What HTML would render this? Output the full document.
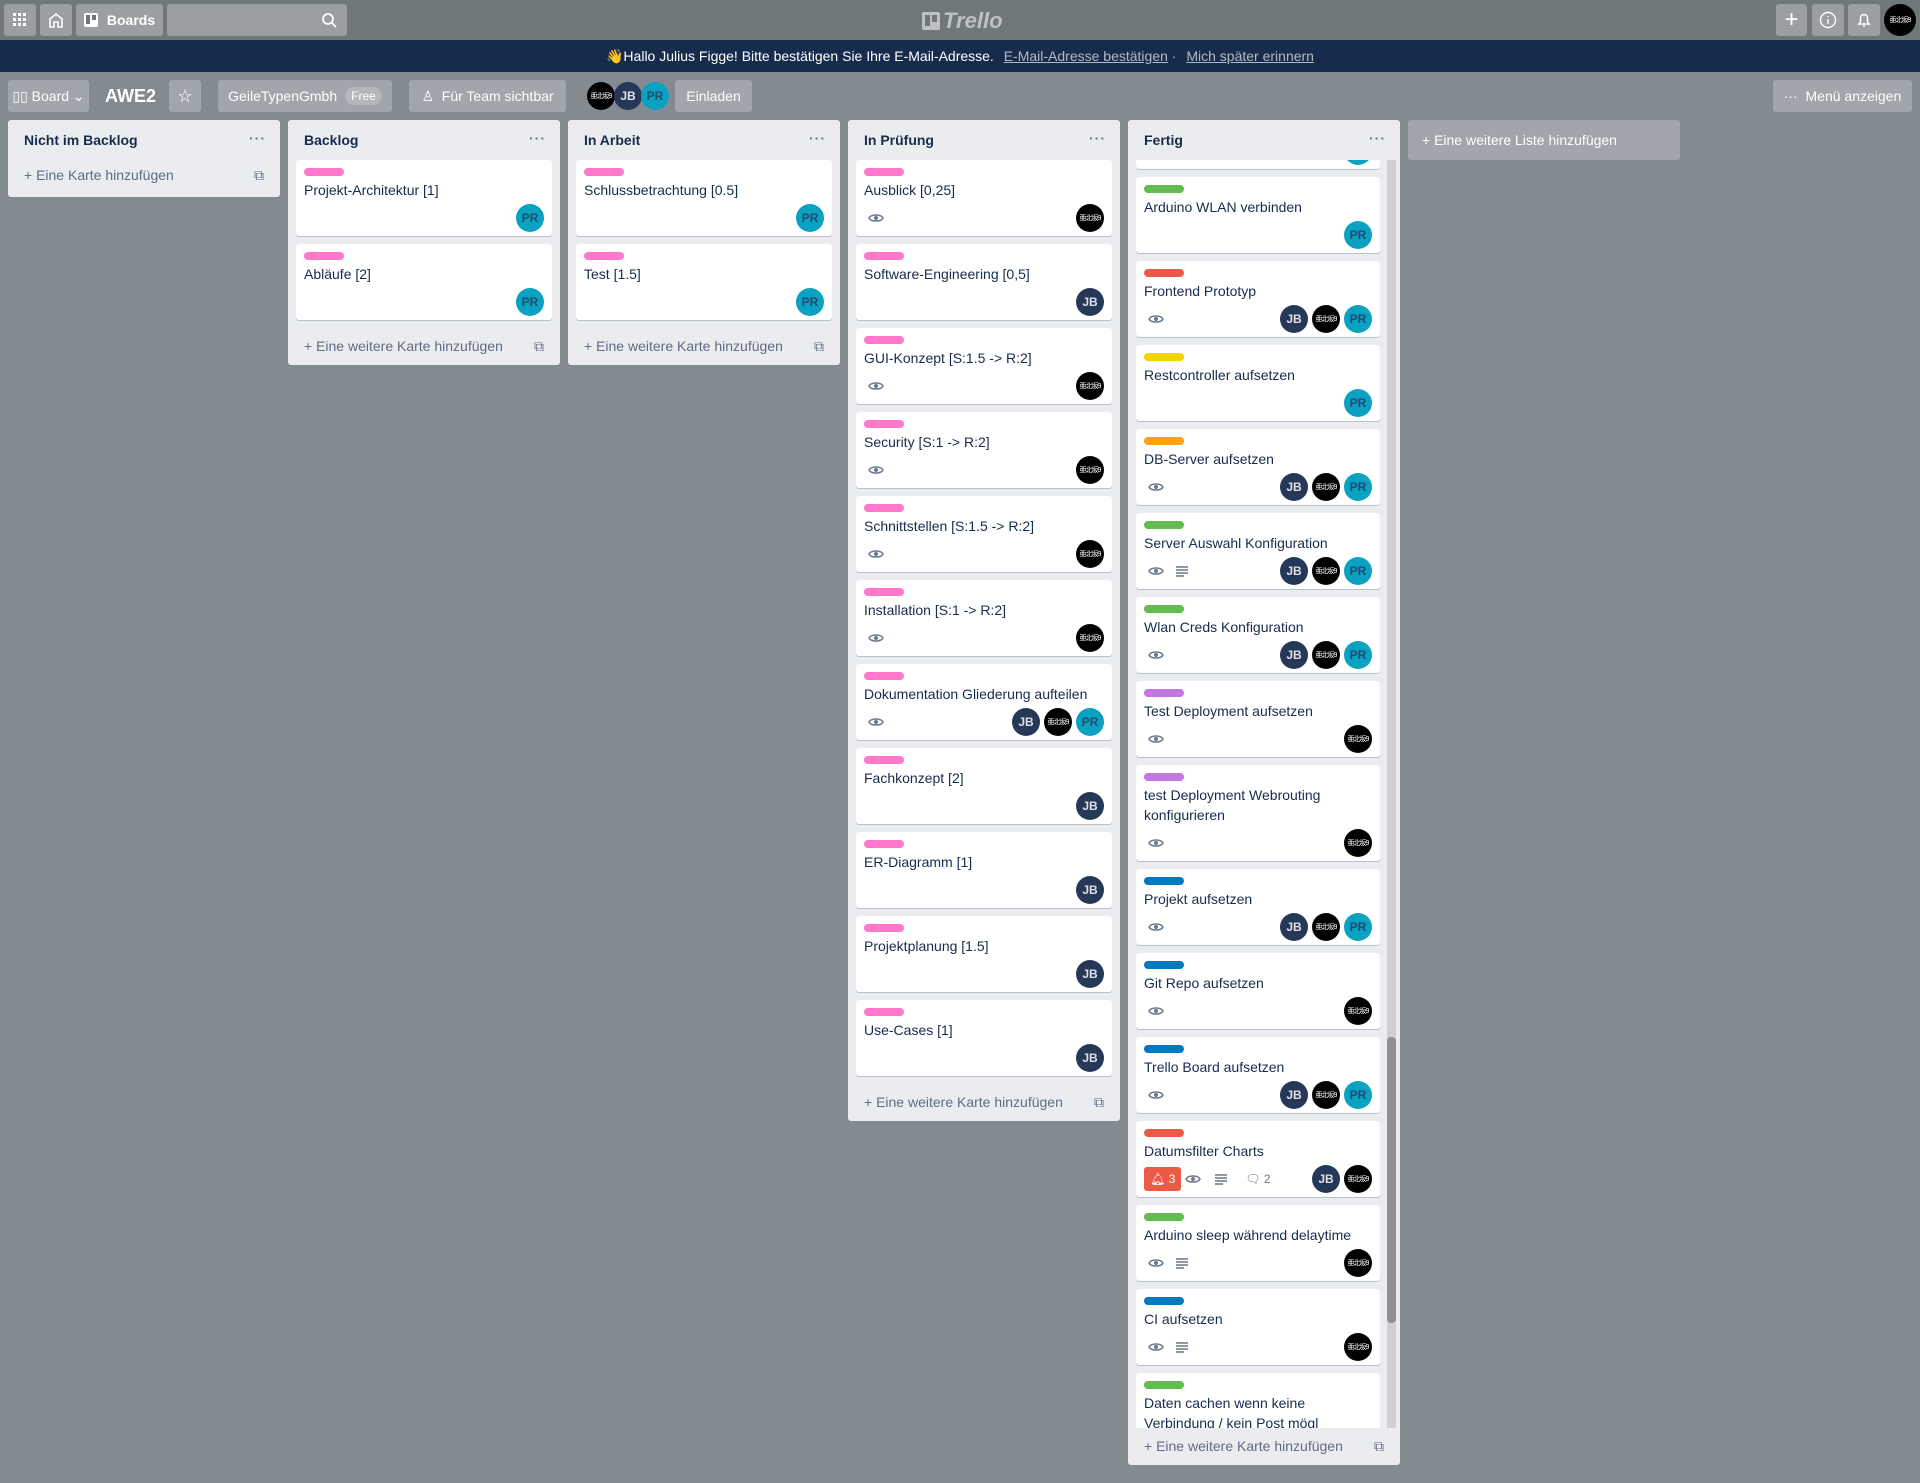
<!DOCTYPE html>
<html><head><meta charset="utf-8"><style>
*{box-sizing:border-box;margin:0;padding:0}
body{width:1920px;height:1483px;overflow:hidden;background:#838b91;font-family:"Liberation Sans","Noto Sans CJK JP",sans-serif;color:#172b4d;position:relative}
.top{position:absolute;left:0;top:0;width:1920px;height:40px;background:#6f7779}
.tb{position:absolute;top:4px;height:32px;background:rgba(255,255,255,.3);border-radius:3px;color:#fff;font-size:14px;font-weight:bold;display:flex;align-items:center;justify-content:center}
.banner{position:absolute;left:0;top:40px;width:1920px;height:32px;background:#172b4d;color:#fff;font-size:14px;text-align:center;line-height:32px}
.banner u{color:#b3bac5;margin-left:6px}
.bb{position:absolute;top:80px;height:32px;background:rgba(255,255,255,.24);border-radius:3px;color:#fff;font-size:14px;display:flex;align-items:center;justify-content:center}
.list{position:absolute;top:120px;width:272px;background:#ebecf0;border-radius:3px}
.lh{height:40px;padding:0 16px;font-weight:bold;font-size:14px;line-height:40px;position:relative}
.lh:after{content:"···";position:absolute;right:14px;top:-2px;color:#6b778c;font-weight:bold;letter-spacing:1px}
.cards{padding:0 8px}
.card{background:#fff;border-radius:3px;box-shadow:0 1px 0 #b8bfcb;margin-bottom:8px;padding:8px 8px 4px;position:relative}
.lab{width:40px;height:8px;border-radius:4px;margin-bottom:4px}
.t{font-size:14px;line-height:20px;color:#172b4d}
.f{height:28px;margin-top:4px;display:flex;align-items:center}
.b{display:flex;align-items:center;gap:0;flex:1}
.b svg{margin:0 6px 0 4px}
.avs{display:flex;gap:4px}
.av{width:28px;height:28px;border-radius:50%;font-size:12px;font-weight:bold;display:flex;align-items:center;justify-content:center}
.jb{background:#253858;color:#dfe1e6}
.pr{background:#0aa1c2;color:#1d4e6e}
.x{background:#000;color:#fff;font-size:7px;font-weight:normal;letter-spacing:-1px}
.add{height:36px;padding:0 16px;display:flex;align-items:center;color:#5e6c84;font-size:14px}
.add span{flex:1}
.pk{background:#ff78cb}.gr{background:#61bd4f}.rd{background:#eb5a46}.yl{background:#f2d600}.or{background:#ff9f1a}.pu{background:#c377e0}.bl{background:#0079bf}
</style></head><body>
<div class="top">
<div class="tb" style="left:4px;width:32px"><svg width="14" height="14" viewBox="0 0 14 14" fill="#fff"><rect x="0" y="0" width="3" height="3"/><rect x="5" y="0" width="3" height="3"/><rect x="10" y="0" width="3" height="3"/><rect x="0" y="5" width="3" height="3"/><rect x="5" y="5" width="3" height="3"/><rect x="10" y="5" width="3" height="3"/><rect x="0" y="10" width="3" height="3"/><rect x="5" y="10" width="3" height="3"/><rect x="10" y="10" width="3" height="3"/></svg></div>
<div class="tb" style="left:40px;width:32px"><svg width="16" height="16" viewBox="0 0 16 16" fill="none" stroke="#fff" stroke-width="1.6"><path d="M2 15V7l6-5 6 5v8h-4v-5H6v5z"/></svg></div>
<div class="tb" style="left:76px;width:87px"><svg width="14" height="14" viewBox="0 0 14 14" style="margin-right:9px"><rect width="14" height="14" rx="2" fill="#fff"/><rect x="2" y="2" width="4" height="9" fill="#6f7779"/><rect x="8" y="2" width="4" height="5" fill="#6f7779"/></svg>Boards</div>
<div class="tb" style="left:167px;width:180px;justify-content:flex-end;padding-right:10px"><svg width="16" height="16" viewBox="0 0 16 16" fill="none" stroke="#fff" stroke-width="1.8"><circle cx="7" cy="7" r="5"/><path d="M11 11l4 4"/></svg></div>
<div style="position:absolute;left:922px;top:8px;color:rgba(255,255,255,.55);font-size:22px;font-style:italic;font-weight:bold;display:flex;align-items:center"><svg width="18" height="18" viewBox="0 0 18 18" style="margin-right:3px"><rect width="18" height="18" rx="2" fill="rgba(255,255,255,.55)"/><rect x="3" y="3" width="5" height="11" fill="#6f7779"/><rect x="10" y="3" width="5" height="7" fill="#6f7779"/></svg>Trello</div>
<div class="tb" style="left:1776px;width:31px;font-size:24px;font-weight:normal">+</div>
<div class="tb" style="left:1812px;width:32px"><svg width="18" height="18" viewBox="0 0 18 18" fill="none" stroke="#fff" stroke-width="1.4"><circle cx="9" cy="9" r="7.5"/><path d="M9 8v5M9 5v1"/></svg></div>
<div class="tb" style="left:1848px;width:32px"><svg width="14" height="16" viewBox="0 0 14 16" fill="none" stroke="#fff" stroke-width="1.5"><path d="M2 12h10l-1.5-2V6a3.5 3.5 0 0 0-7 0v4zM6 14h2"/></svg></div>
<div class="av x" style="position:absolute;left:1884px;top:4px;width:32px;height:32px">亜北坂9</div>
</div>
<div class="banner">👋Hallo Julius Figge! Bitte bestätigen Sie Ihre E-Mail-Adresse. <u>E-Mail-Adresse bestätigen</u> <span style="color:#b3bac5">·</span> <u>Mich später erinnern</u></div>
<div class="bb" style="left:8px;width:81px">▯▯ Board ⌄</div>
<div style="position:absolute;left:105px;top:80px;line-height:32px;color:#fff;font-weight:bold;font-size:18px">AWE2</div>
<div class="bb" style="left:169px;width:32px">☆</div>
<div class="bb" style="left:218px;width:174px">GeileTypenGmbh<span style="margin-left:8px;background:rgba(255,255,255,.2);border-radius:10px;padding:2px 6px;font-size:12px">Free</span></div>
<div class="bb" style="left:409px;width:157px">&#9817;&nbsp; Für Team sichtbar</div>
<div class="av x" style="position:absolute;left:587px;top:82px">亜北坂9</div>
<div class="av jb" style="position:absolute;left:614px;top:82px">JB</div>
<div class="av pr" style="position:absolute;left:641px;top:82px">PR</div>
<div class="bb" style="left:675px;width:77px">Einladen</div>
<div class="bb" style="left:1773px;width:139px">···&nbsp; Menü anzeigen</div>

<svg width="0" height="0" style="position:absolute"><defs>
<symbol id="eye" viewBox="0 0 16 16"><path d="M1 8c2-4 12-4 14 0-2 4-12 4-14 0z" fill="none" stroke="#6b778c" stroke-width="1.5"/><circle cx="8" cy="8" r="2" fill="#6b778c"/></symbol>
<symbol id="desc" viewBox="0 0 16 16"><path d="M2 4h12M2 7h12M2 10h12M2 13h8" stroke="#6b778c" stroke-width="1.4"/></symbol>
</defs></svg>

<div class="list" style="left:8px;height:77px"><div class="lh">Nicht im Backlog</div><div class="add" style="height:30px"><span>+ Eine Karte hinzufügen</span>⧉</div></div>

<div class="list" style="left:288px;height:245px"><div class="lh">Backlog</div><div class="cards">
<div class="card"><div class="lab pk"></div><div class="t">Projekt-Architektur [1]</div><div class="f"><div class="b"></div><div class="avs"><div class="av pr">PR</div></div></div></div>
<div class="card"><div class="lab pk"></div><div class="t">Abläufe [2]</div><div class="f"><div class="b"></div><div class="avs"><div class="av pr">PR</div></div></div></div>
</div><div class="add"><span>+ Eine weitere Karte hinzufügen</span>⧉</div></div>

<div class="list" style="left:568px;height:245px"><div class="lh">In Arbeit</div><div class="cards">
<div class="card"><div class="lab pk"></div><div class="t">Schlussbetrachtung [0.5]</div><div class="f"><div class="b"></div><div class="avs"><div class="av pr">PR</div></div></div></div>
<div class="card"><div class="lab pk"></div><div class="t">Test [1.5]</div><div class="f"><div class="b"></div><div class="avs"><div class="av pr">PR</div></div></div></div>
</div><div class="add"><span>+ Eine weitere Karte hinzufügen</span>⧉</div></div>

<div class="list" style="left:848px;height:1001px"><div class="lh">In Prüfung</div><div class="cards">
<div class="card"><div class="lab pk"></div><div class="t">Ausblick [0,25]</div><div class="f"><div class="b"><svg width="16" height="16"><use href="#eye"/></svg></div><div class="avs"><div class="av x">亜北坂9</div></div></div></div>
<div class="card"><div class="lab pk"></div><div class="t">Software-Engineering [0,5]</div><div class="f"><div class="b"></div><div class="avs"><div class="av jb">JB</div></div></div></div>
<div class="card"><div class="lab pk"></div><div class="t">GUI-Konzept [S:1.5 -&gt; R:2]</div><div class="f"><div class="b"><svg width="16" height="16"><use href="#eye"/></svg></div><div class="avs"><div class="av x">亜北坂9</div></div></div></div>
<div class="card"><div class="lab pk"></div><div class="t">Security [S:1 -&gt; R:2]</div><div class="f"><div class="b"><svg width="16" height="16"><use href="#eye"/></svg></div><div class="avs"><div class="av x">亜北坂9</div></div></div></div>
<div class="card"><div class="lab pk"></div><div class="t">Schnittstellen [S:1.5 -&gt; R:2]</div><div class="f"><div class="b"><svg width="16" height="16"><use href="#eye"/></svg></div><div class="avs"><div class="av x">亜北坂9</div></div></div></div>
<div class="card"><div class="lab pk"></div><div class="t">Installation [S:1 -&gt; R:2]</div><div class="f"><div class="b"><svg width="16" height="16"><use href="#eye"/></svg></div><div class="avs"><div class="av x">亜北坂9</div></div></div></div>
<div class="card"><div class="lab pk"></div><div class="t">Dokumentation Gliederung aufteilen</div><div class="f"><div class="b"><svg width="16" height="16"><use href="#eye"/></svg></div><div class="avs"><div class="av jb">JB</div><div class="av x">亜北坂9</div><div class="av pr">PR</div></div></div></div>
<div class="card"><div class="lab pk"></div><div class="t">Fachkonzept [2]</div><div class="f"><div class="b"></div><div class="avs"><div class="av jb">JB</div></div></div></div>
<div class="card"><div class="lab pk"></div><div class="t">ER-Diagramm [1]</div><div class="f"><div class="b"></div><div class="avs"><div class="av jb">JB</div></div></div></div>
<div class="card"><div class="lab pk"></div><div class="t">Projektplanung [1.5]</div><div class="f"><div class="b"></div><div class="avs"><div class="av jb">JB</div></div></div></div>
<div class="card"><div class="lab pk"></div><div class="t">Use-Cases [1]</div><div class="f"><div class="b"></div><div class="avs"><div class="av jb">JB</div></div></div></div>
</div><div class="add"><span>+ Eine weitere Karte hinzufügen</span>⧉</div></div>

<div class="list" style="left:1128px;height:1345px"><div class="lh">Fertig</div>
<div style="position:absolute;left:0;top:40px;width:272px;height:1268px;overflow:hidden">
<div style="position:absolute;left:259px;top:0;width:9px;height:1268px;background:#cfd0d2"></div>
<div style="position:absolute;left:259px;top:877px;width:9px;height:286px;background:#8f9193;border-radius:4px"></div>
<div style="position:absolute;left:8px;top:-67px;width:244px">
<div class="card"><div class="lab gr"></div><div class="t">Hidden</div><div class="f"><div class="b"></div><div class="avs"><div class="av pr">PR</div></div></div></div>
<div class="card"><div class="lab gr"></div><div class="t">Arduino WLAN verbinden</div><div class="f"><div class="b"></div><div class="avs"><div class="av pr">PR</div></div></div></div>
<div class="card"><div class="lab rd"></div><div class="t">Frontend Prototyp</div><div class="f"><div class="b"><svg width="16" height="16"><use href="#eye"/></svg></div><div class="avs"><div class="av jb">JB</div><div class="av x">亜北坂9</div><div class="av pr">PR</div></div></div></div>
<div class="card"><div class="lab yl"></div><div class="t">Restcontroller aufsetzen</div><div class="f"><div class="b"></div><div class="avs"><div class="av pr">PR</div></div></div></div>
<div class="card"><div class="lab or"></div><div class="t">DB-Server aufsetzen</div><div class="f"><div class="b"><svg width="16" height="16"><use href="#eye"/></svg></div><div class="avs"><div class="av jb">JB</div><div class="av x">亜北坂9</div><div class="av pr">PR</div></div></div></div>
<div class="card"><div class="lab gr"></div><div class="t">Server Auswahl Konfiguration</div><div class="f"><div class="b"><svg width="16" height="16"><use href="#eye"/></svg><svg width="16" height="16"><use href="#desc"/></svg></div><div class="avs"><div class="av jb">JB</div><div class="av x">亜北坂9</div><div class="av pr">PR</div></div></div></div>
<div class="card"><div class="lab gr"></div><div class="t">Wlan Creds Konfiguration</div><div class="f"><div class="b"><svg width="16" height="16"><use href="#eye"/></svg></div><div class="avs"><div class="av jb">JB</div><div class="av x">亜北坂9</div><div class="av pr">PR</div></div></div></div>
<div class="card"><div class="lab pu"></div><div class="t">Test Deployment aufsetzen</div><div class="f"><div class="b"><svg width="16" height="16"><use href="#eye"/></svg></div><div class="avs"><div class="av x">亜北坂9</div></div></div></div>
<div class="card"><div class="lab pu"></div><div class="t">test Deployment Webrouting<br>konfigurieren</div><div class="f"><div class="b"><svg width="16" height="16"><use href="#eye"/></svg></div><div class="avs"><div class="av x">亜北坂9</div></div></div></div>
<div class="card"><div class="lab bl"></div><div class="t">Projekt aufsetzen</div><div class="f"><div class="b"><svg width="16" height="16"><use href="#eye"/></svg></div><div class="avs"><div class="av jb">JB</div><div class="av x">亜北坂9</div><div class="av pr">PR</div></div></div></div>
<div class="card"><div class="lab bl"></div><div class="t">Git Repo aufsetzen</div><div class="f"><div class="b"><svg width="16" height="16"><use href="#eye"/></svg></div><div class="avs"><div class="av x">亜北坂9</div></div></div></div>
<div class="card"><div class="lab bl"></div><div class="t">Trello Board aufsetzen</div><div class="f"><div class="b"><svg width="16" height="16"><use href="#eye"/></svg></div><div class="avs"><div class="av jb">JB</div><div class="av x">亜北坂9</div><div class="av pr">PR</div></div></div></div>
<div class="card"><div class="lab rd"></div><div class="t">Datumsfilter Charts</div><div class="f"><div class="b" style="font-size:12px;color:#6b778c"><span style="background:#eb5a46;color:#fff;border-radius:3px;padding:3px 6px;height:24px;display:flex;align-items:center">🔔︎ 3</span><svg width="16" height="16"><use href="#eye"/></svg><svg width="16" height="16" style="margin-left:6px"><use href="#desc"/></svg><span style="margin-left:10px">🗨︎ 2</span></div><div class="avs"><div class="av jb">JB</div><div class="av x">亜北坂9</div></div></div></div>
<div class="card"><div class="lab gr"></div><div class="t">Arduino sleep während delaytime</div><div class="f"><div class="b"><svg width="16" height="16"><use href="#eye"/></svg><svg width="16" height="16"><use href="#desc"/></svg></div><div class="avs"><div class="av x">亜北坂9</div></div></div></div>
<div class="card"><div class="lab bl"></div><div class="t">CI aufsetzen</div><div class="f"><div class="b"><svg width="16" height="16"><use href="#eye"/></svg><svg width="16" height="16"><use href="#desc"/></svg></div><div class="avs"><div class="av x">亜北坂9</div></div></div></div>
<div class="card"><div class="lab gr"></div><div class="t">Daten cachen wenn keine<br>Verbindung / kein Post mögl</div><div class="f"></div></div>
</div></div>
<div class="add" style="position:absolute;top:1308px;left:0;width:272px"><span>+ Eine weitere Karte hinzufügen</span>⧉</div>
</div>

<div style="position:absolute;left:1408px;top:120px;width:272px;height:40px;background:rgba(255,255,255,.24);border-radius:3px;color:#fff;font-size:14px;line-height:40px;padding-left:14px">+ Eine weitere Liste hinzufügen</div>
</body></html>
